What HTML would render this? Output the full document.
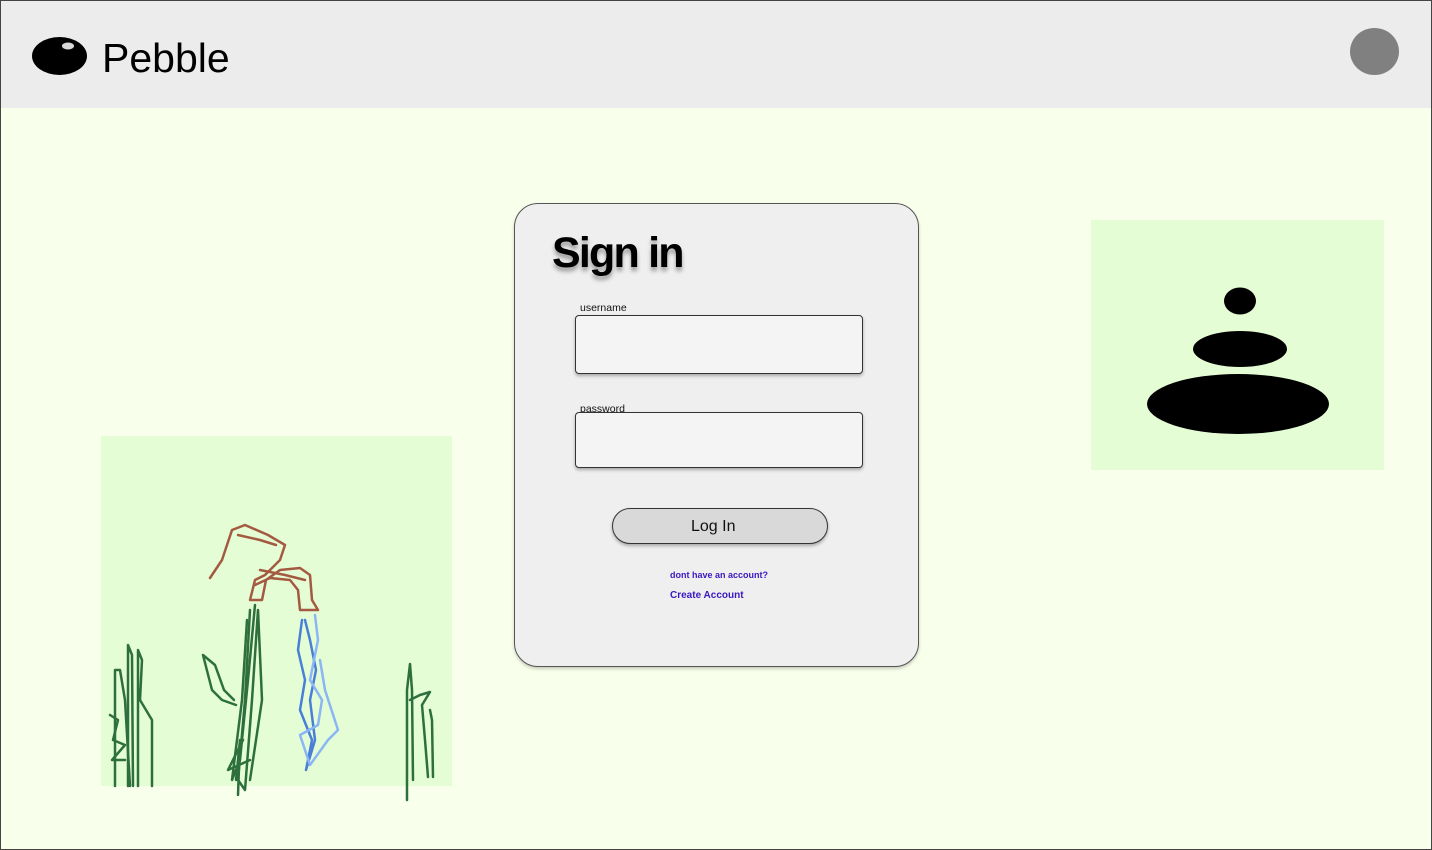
<!DOCTYPE html>
<html><head><meta charset="utf-8"><style>
html,body{margin:0;padding:0}
body{width:1432px;height:850px;position:relative;overflow:hidden;background:#f8ffea;font-family:"Liberation Sans",sans-serif;}
.frame{position:absolute;left:0;top:0;width:1430px;height:848px;border:1px solid #444;pointer-events:none}
.hdr{position:absolute;left:0;top:0;width:1432px;height:108px;background:#ececec}
.logo{position:absolute;left:102px;top:35px;font-size:41px;color:#000}
.av{position:absolute;left:1350px;top:28px;width:49px;height:47px;border-radius:50%;background:#808080}
.card{position:absolute;left:514px;top:203px;width:403px;height:462px;border:1px solid #555;border-radius:24px;background:#efefef;box-shadow:0 2px 3px rgba(0,0,0,.2)}
.title{position:absolute;left:552px;top:229px;font-size:43px;font-weight:bold;letter-spacing:-1.8px;text-shadow:0 4px 4px rgba(0,0,0,.35)}
.lbl{position:absolute;font-size:10.5px;color:#111}
.inp{position:absolute;left:575px;width:286px;border:1px solid #333;border-radius:4px;background:#f4f4f4;box-shadow:0 2px 3px rgba(0,0,0,.3)}
.btn{position:absolute;left:612px;top:508px;width:214px;height:34px;border:1px solid #333;border-radius:18px;background:#d9d9d9;box-shadow:0 2px 3px rgba(0,0,0,.3);line-height:36px;font-size:16px;color:#111}
.lk{position:absolute;color:#3a17c0;font-weight:bold}
</style></head><body>
<div class="hdr"></div>
<svg style="position:absolute;left:30px;top:35px" width="60" height="42"><ellipse cx="29.5" cy="21" rx="27.5" ry="19" fill="#000"/><ellipse cx="38" cy="11" rx="6" ry="3.5" fill="#d8d8d8"/></svg>
<div class="logo">Pebble</div>
<div class="av"></div>
<div class="card"></div>
<div class="title">Sign in</div>
<div class="lbl" style="left:580px;top:302px">username</div>
<div class="inp" style="top:315px;height:57px"></div>
<div class="lbl" style="left:580px;top:403px">password</div>
<div class="inp" style="top:412px;height:54px"></div>
<div class="btn"><span style="position:absolute;left:78px">Log In</span></div>
<div class="lk" style="left:670px;top:570px;font-size:9px">dont have an account?</div>
<div class="lk" style="left:670px;top:590px;font-size:10px">Create Account</div>
<div style="position:absolute;left:1091px;top:220px;width:293px;height:250px;background:#e5fdd5"></div>
<svg style="position:absolute;left:1091px;top:220px" width="293" height="250"><ellipse cx="149" cy="81" rx="16" ry="13.5"/><ellipse cx="149" cy="129" rx="47" ry="18"/><ellipse cx="147" cy="184" rx="91" ry="30"/></svg>
<div style="position:absolute;left:101px;top:436px;width:351px;height:350px;background:#e5fdd5"></div>
<svg style="position:absolute;left:0;top:0" width="1432" height="850" fill="none" stroke-width="2.5" stroke-linecap="round" stroke-linejoin="round">
<g stroke="#2e6f3e">
<path d="M115 786 L115 670 L120 670 L125 700 L130 786"/>
<path d="M128 786 L128 645 L132 655 L133 786"/>
<path d="M138 786 L138 650 L142 660 L140 700 L152 720 L152 786"/>
<path d="M110 715 L118 720 L113 740 L125 745 L112 760 L125 760"/>
<path d="M250 610 L245 700 L238 780 L245 790 L252 700 L258 610 L262 700 L250 780"/>
<path d="M255 605 L248 680 L240 760 L232 780 L242 700 L247 620"/>
<path d="M238 795 L240 740 L236 780 M243 740 L228 770 L250 760"/>
<path d="M236 705 L222 700 L212 690 L203 655 L215 665 L224 690 L234 700"/>
<path d="M407 800 L407 690 L410 664 L412 690 L413 780"/>
<path d="M410 700 L420 695 L430 692 L422 705 L425 740 L428 777"/>
<path d="M433 777 L432 720 L430 710"/>
</g>
<g stroke="#a35a40">
<path d="M210 578 L222 560 L232 530 L245 525 L268 535 L285 545 L280 560 L265 575 L255 580 L250 600 L262 600 L266 580 L280 570 L300 568 L310 575 L312 600 L318 610 L300 610 L298 590 L290 580 L270 578 L255 585"/>
<path d="M238 535 L260 540 L276 545 M260 570 L285 575 L305 580"/>
</g>
<g stroke="#4a7fd8"><path d="M302 620 L298 650 L305 680 L300 710 L312 740 L306 770 L315 740 L310 700 L316 670 L310 640 L305 620"/></g>
<g stroke="#8ab6f5"><path d="M315 615 L318 640 L310 680 L322 700 L318 725 L300 735 L310 765 L328 740 L338 730 L325 690 L320 660"/></g>
</svg>
<div class="frame"></div>
</body></html>
